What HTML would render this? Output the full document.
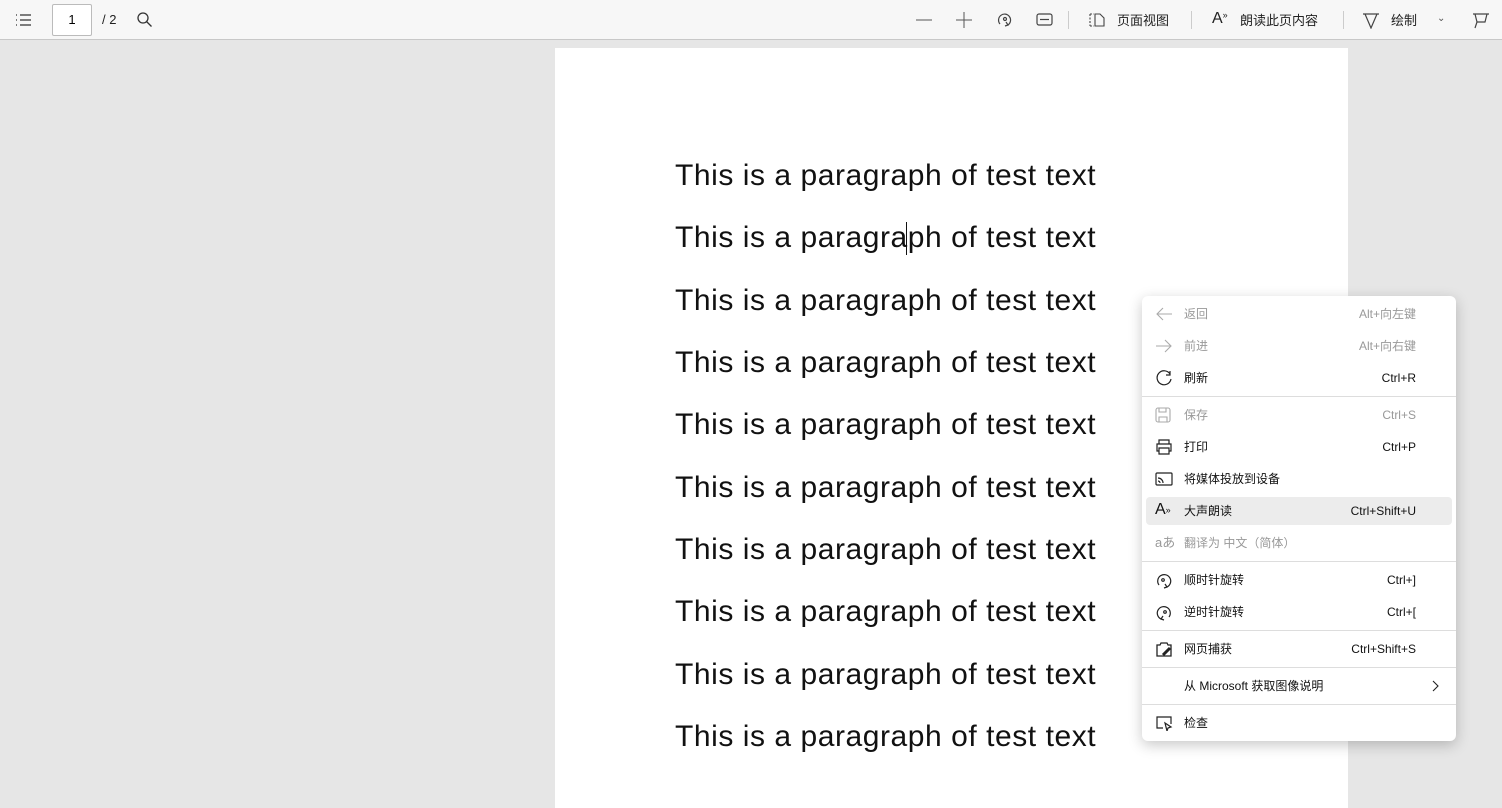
<!DOCTYPE html>
<html><head><meta charset="utf-8"><style>
*{margin:0;padding:0;box-sizing:border-box}
body{width:1502px;height:807px;background:#e6e6e6;position:relative;overflow:hidden;font-family:"Liberation Sans","Noto Sans CJK SC",sans-serif}
.tb{position:absolute;left:0;top:0;width:1502px;height:40px;background:#f7f7f7;border-bottom:1px solid #c8c8c8}
.tb .t{position:absolute;top:10px;font-size:13px;color:#222}
.sep{position:absolute;top:11px;width:1px;height:18px;background:#ccc}
.page{position:absolute;left:555px;top:48px;width:793px;height:760px;background:#fff}
.line{position:absolute;left:675px;font-size:30px;color:#111;white-space:nowrap;letter-spacing:0.55px}
.menu{position:absolute;left:1142px;top:296px;width:314px;height:445px;background:#fff;border-radius:6px;box-shadow:0 4px 14px rgba(0,0,0,.22)}
.it{position:absolute;left:0;width:314px;height:30px;font-size:12px;color:#111;line-height:30px}
.it .l{position:absolute;left:42px;top:0}
.it .r{position:absolute;right:40px;top:0}
.it.d{color:#999}
.it svg{position:absolute;left:13px;top:7px}
.hs{position:absolute;left:0;width:314px;height:1px;background:#ddd}
</style></head><body>
<div class="tb">
<svg style="position:absolute;left:15px;top:13px" width="18" height="14" fill="none" stroke="#333" stroke-width="1.2"><path d="M1 2h1M5 2h11M1 7h1M5 7h11M1 12h1M5 12h11"/></svg>
<div style="position:absolute;left:52px;top:4px;width:40px;height:32px;border:1px solid #bbb;background:#fff;border-radius:2px;font-size:13px;text-align:center;line-height:30px">1</div>
<div class="t" style="left:102px;top:12px">/ 2</div>
<svg style="position:absolute;left:137px;top:12px" width="16" height="16" fill="none" stroke="#333" stroke-width="1.3"><circle cx="6" cy="6" r="5"/><path d="M9.5 9.5l5 5"/></svg>
<svg style="position:absolute;left:916px;top:19px" width="16" height="2"><path d="M0 1h16" stroke="#555"/></svg>
<svg style="position:absolute;left:956px;top:12px" width="16" height="16"><path d="M0 8h16M8 0v16" stroke="#555"/></svg>
<svg style="position:absolute;left:996px;top:11px" width="18" height="18" fill="none" stroke="#444" stroke-width="1.2"><path d="M4 13A6 6 0 1 1 12 14"/><circle cx="9" cy="8" r="1.5"/><path d="M10 11l2 3-3 1"/></svg>
<svg style="position:absolute;left:1036px;top:13px" width="17" height="14" fill="none" stroke="#444" stroke-width="1.2"><rect x="1" y="1" width="15" height="11" rx="2"/><path d="M4 6.5h9"/></svg>
<div class="sep" style="left:1068px"></div>
<svg style="position:absolute;left:1089px;top:12px" width="16" height="16" fill="none" stroke="#444" stroke-width="1.1"><path d="M1 2h4M1 14h4M1 2v12" stroke-dasharray="2 1.5"/><path d="M6 2h5l4 4v8H6z"/></svg>
<div class="t" style="left:1117px">页面视图</div>
<div class="sep" style="left:1191px"></div>
<div class="t" style="left:1212px;font-size:16px;top:10px">A<span style="font-size:9px;vertical-align:top">»</span></div>
<div class="t" style="left:1240px">朗读此页内容</div>
<div class="sep" style="left:1343px"></div>
<svg style="position:absolute;left:1362px;top:11px" width="18" height="18" fill="none" stroke="#444" stroke-width="1.2"><path d="M1 3h16M3 3l6 14 6-14"/></svg>
<div class="t" style="left:1391px">绘制</div>
<div class="t" style="left:1437px;font-size:10px;top:13px;color:#555">⌄</div>
<svg style="position:absolute;left:1472px;top:11px" width="18" height="18" fill="none" stroke="#444" stroke-width="1.2"><path d="M1 3h16M3 3l2 8h8l2-8M5 11l-2 6"/></svg>
</div>
<div class="page"></div>
<div class="line" style="top:159px">This is a paragraph of test text</div>
<div class="line" style="top:221px">This is a paragraph of test text</div>
<div style="position:absolute;left:906px;top:222px;width:1px;height:33px;background:#111"></div>
<div class="line" style="top:284px">This is a paragraph of test text</div>
<div class="line" style="top:346px">This is a paragraph of test text</div>
<div class="line" style="top:408px">This is a paragraph of test text</div>
<div class="line" style="top:471px">This is a paragraph of test text</div>
<div class="line" style="top:533px">This is a paragraph of test text</div>
<div class="line" style="top:595px">This is a paragraph of test text</div>
<div class="line" style="top:658px">This is a paragraph of test text</div>
<div class="line" style="top:720px">This is a paragraph of test text</div>
<div class="menu">
<div class="it d" style="top:3px"><svg width="18" height="16" fill="none" stroke="#aaa" stroke-width="1.1"><path d="M17 8H2M8 2L2 8l6 6"/></svg><span class="l">返回</span><span class="r">Alt+向左键</span></div>
<div class="it d" style="top:35px"><svg width="18" height="16" fill="none" stroke="#aaa" stroke-width="1.1"><path d="M1 8h15M10 2l6 6-6 6"/></svg><span class="l">前进</span><span class="r">Alt+向右键</span></div>
<div class="it" style="top:67px"><svg width="18" height="18" fill="none" stroke="#222" stroke-width="1.2"><path d="M15 4A7 7 0 1 0 16 9"/><path d="M15 1v4h-4"/></svg><span class="l">刷新</span><span class="r">Ctrl+R</span></div>
<div class="hs" style="top:100px"></div>
<div class="it d" style="top:104px"><svg width="16" height="16" fill="none" stroke="#aaa" stroke-width="1.1"><rect x="1" y="1" width="14" height="14" rx="2"/><path d="M4 1v4h7V1M4 15v-5h8v5"/></svg><span class="l">保存</span><span class="r">Ctrl+S</span></div>
<div class="it" style="top:136px"><svg width="18" height="16" fill="none" stroke="#222" stroke-width="1.2"><path d="M4 5V1h10v4M4 12H2V5h14v7h-2M4 9h10v6H4z"/></svg><span class="l">打印</span><span class="r">Ctrl+P</span></div>
<div class="it" style="top:168px"><svg width="18" height="16" fill="none" stroke="#222" stroke-width="1.2"><rect x="1" y="2" width="16" height="12" rx="1"/><path d="M3 7a5 5 0 0 1 5 5M3 10a2 2 0 0 1 2 2"/></svg><span class="l">将媒体投放到设备</span></div>
<div style="position:absolute;left:4px;top:201px;width:306px;height:28px;background:#ececec;border-radius:4px"></div>
<div class="it" style="top:200px"><span style="position:absolute;left:13px;top:-1px;font-size:16px">A<span style="font-size:9px;vertical-align:top">»</span></span><span class="l">大声朗读</span><span class="r">Ctrl+Shift+U</span></div>
<div class="it d" style="top:232px"><span style="position:absolute;left:13px;top:0;font-size:13px;color:#999">aあ</span><span class="l">翻译为 中文（简体）</span></div>
<div class="hs" style="top:265px"></div>
<div class="it" style="top:269px"><svg width="18" height="18" fill="none" stroke="#222" stroke-width="1.2"><path d="M4 13A6.5 6.5 0 1 1 12 15"/><circle cx="8" cy="8" r="1.3"/><path d="M10 12l2 3-3 1"/></svg><span class="l">顺时针旋转</span><span class="r">Ctrl+]</span></div>
<div class="it" style="top:301px"><svg width="18" height="18" fill="none" stroke="#222" stroke-width="1.2"><path d="M14 13A6.5 6.5 0 1 0 6 15"/><circle cx="10" cy="8" r="1.3"/><path d="M8 12l-2 3 3 1"/></svg><span class="l">逆时针旋转</span><span class="r">Ctrl+[</span></div>
<div class="hs" style="top:334px"></div>
<div class="it" style="top:338px"><svg width="18" height="18" fill="none" stroke="#222" stroke-width="1.3"><path d="M6 2h6l1 2h3v11H2V4h3z"/><path d="M8 14l7-7" stroke-width="3"/></svg><span class="l">网页捕获</span><span class="r">Ctrl+Shift+S</span></div>
<div class="hs" style="top:371px"></div>
<div class="it" style="top:375px"><span class="l">从 Microsoft 获取图像说明</span><svg style="left:290px;top:9px" width="8" height="12" fill="none" stroke="#222" stroke-width="1.1"><path d="M1 1l5 5-5 5"/></svg></div>
<div class="hs" style="top:408px"></div>
<div class="it" style="top:412px"><svg width="18" height="16" fill="none" stroke="#222" stroke-width="1.2"><path d="M8 13H2V2h14v7"/><path d="M10 8l6 4-3 1-1 3z"/></svg><span class="l">检查</span></div>
</div>
</body></html>
